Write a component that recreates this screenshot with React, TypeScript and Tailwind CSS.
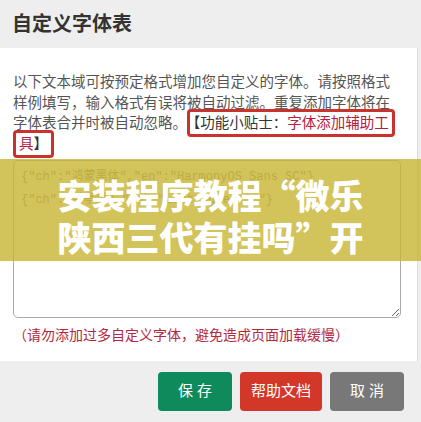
import React from 'react';

const fontStack = {
  fontFamily: '"Liberation Sans", "Noto Sans CJK SC", sans-serif',
};

const fontRows = [
  '{"ch":"鸿蒙黑体","en":"HarmonyOS Sans SC"}',
  '{"ch":"兰亭黑","en":"Lantinghei SC"}',
];

export default function App() {
  return (
    <div className="relative h-[422px] w-[421px] overflow-hidden bg-[#eeeeee]" style={fontStack}>
      {/* Header */}
      <header className="flex h-[48px] items-center bg-[#eeeeee] px-[12px]">
        <h1 className="text-[20px] font-bold text-[#333]">自定义字体表</h1>
      </header>

      {/* Body */}
      <main className="w-[418px] border-r border-[#dcdcdc] bg-white px-[13px] pb-[16px] pt-[24px]">
        <p className="w-[395px] text-[14.5px] leading-[20.5px] text-[#555]">
          以下文本域可按预定格式增加您自定义的字体。请按照格式
          <br />
          样例填写，输入格式有误将被自动过滤。重复添加字体将在
          <br />
          字体表合并时被自动忽略。
          <span className="rounded-[4px] border-[3px] border-[#c8332d] px-[3px] py-[3px] [box-decoration-break:clone] [-webkit-box-decoration-break:clone]">
            <span className="text-[#333]">【功能小贴士：</span>
            <span className="text-[#b3213f]">字体添加辅助工具</span>
            <span className="text-[#333]">】</span>
          </span>
        </p>

        <textarea
          readOnly
          value={fontRows.join('\n')}
          className="mt-[6px] block h-[158px] w-[388px] rounded-[5px] border border-[#aaa] px-[7px] py-[5px] text-[12px] leading-[23px] text-[#888] outline-none"
          style={{ fontFamily: '"Liberation Mono", "Noto Sans CJK SC", monospace' }}
        />

        <p className="mt-[7px] text-[14px] leading-[20px] text-[#b3283f]">
          （请勿添加过多自定义字体，避免造成页面加载缓慢）
        </p>
      </main>

      {/* Footer */}
      <footer className="flex h-[61px] items-center justify-end gap-[8px] pr-[17px]">
        <button className="h-[39px] w-[74px] rounded-[4px] bg-[#0e8a5c] text-[15px] text-white">
          保 存
        </button>
        <button className="h-[39px] w-[82px] rounded-[4px] bg-[#d2372a] text-[15px] text-white">
          帮助文档
        </button>
        <button className="h-[39px] w-[74px] rounded-[4px] bg-[#787878] text-[15px] text-white">
          取 消
        </button>
      </footer>

      {/* Banner laid over the dialog */}
      <div className="absolute left-0 top-[159px] h-[102px] w-full bg-[rgba(200,180,50,0.8)] pt-[15px] text-center">
        <div
          className="text-[34px] font-black leading-[42px] text-white"
          style={{ fontFamily: '"Noto Sans CJK SC", sans-serif' }}
        >
          安装程序教程“微乐
          <br />
          陕西三代有挂吗”开
        </div>
      </div>
    </div>
  );
}
